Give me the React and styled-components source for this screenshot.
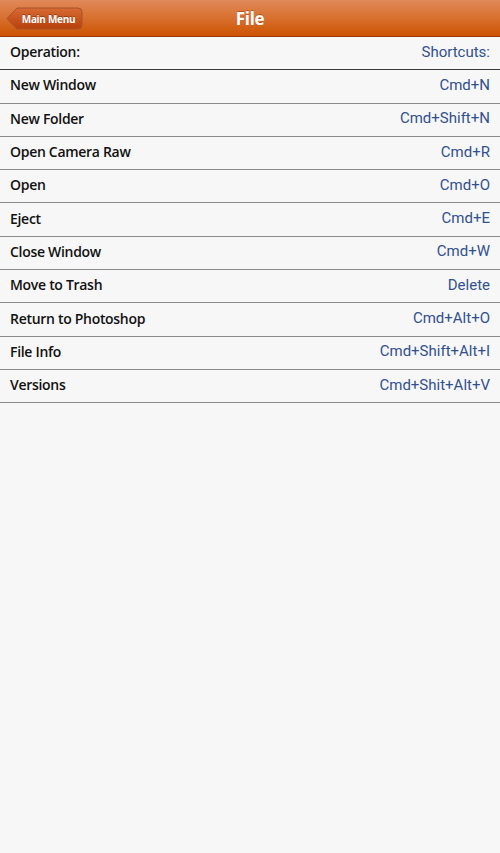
import React from 'react';
import styled, { createGlobalStyle } from 'styled-components';

const GlobalStyle = createGlobalStyle`
  html, body {
    margin: 0;
    padding: 0;
    background: #f7f7f7;
  }
  #root {
    min-height: 100vh;
    background: #f7f7f7;
  }
`;

const Page = styled.div`
  width: 500px;
  min-height: 853px;
  background: #f7f7f7;
  font-family: "Open Sans", "DejaVu Sans", sans-serif;
`;

const TopBar = styled.div`
  position: relative;
  height: 36px;
  display: flex;
  align-items: center;
  justify-content: center;
  background: linear-gradient(#e1895a, #d8702f 50%, #cc5200);
  border-bottom: 1px solid #9e3a08;
`;

const Title = styled.h1`
  margin: 0;
  color: #fff;
  font-size: 17px;
  font-weight: 700;
  letter-spacing: -0.3px;
  text-shadow: 0 -1px 0 rgba(120, 40, 0, 0.4);
`;

const BackButton = styled.button`
  position: absolute;
  left: 6px;
  top: 7px;
  width: 77px;
  height: 23px;
  padding: 0 0 0 8px;
  border: none;
  background: none;
  display: flex;
  align-items: center;
  justify-content: center;
  cursor: pointer;
`;

const BackShape = styled.svg`
  position: absolute;
  left: 0;
  top: 0;
`;

const BackLabel = styled.span`
  position: relative;
  color: #fff;
  font-family: "Open Sans", sans-serif;
  font-size: 10px;
  font-weight: 700;
  letter-spacing: -0.3px;
  text-shadow: 0 -1px 0 rgba(90, 30, 0, 0.5);
  line-height: 22px;
`;

const List = styled.div`
  display: flex;
  flex-direction: column;
`;

const Row = styled.div`
  box-sizing: border-box;
  height: 33.3px;
  display: flex;
  align-items: center;
  justify-content: space-between;
  padding: 0 10px 3px;
  border-bottom: 1px solid ${p => (p.$head ? '#3a3a3a' : '#8a8a8a')};
`;

const Operation = styled.span`
  color: #111;
  font-size: 14px;
  font-weight: 600;
  letter-spacing: -0.3px;
`;

const Shortcut = styled.span`
  color: #31508f;
  font-family: Roboto, "Liberation Sans", sans-serif;
  font-size: 15px;
`;

const rows = [
  ['New Window', 'Cmd+N'],
  ['New Folder', 'Cmd+Shift+N'],
  ['Open Camera Raw', 'Cmd+R'],
  ['Open', 'Cmd+O'],
  ['Eject', 'Cmd+E'],
  ['Close Window', 'Cmd+W'],
  ['Move to Trash', 'Delete'],
  ['Return to Photoshop', 'Cmd+Alt+O'],
  ['File Info', 'Cmd+Shift+Alt+I'],
  ['Versions', 'Cmd+Shit+Alt+V'],
];

export default function App() {
  return (
    <Page>
      <GlobalStyle />
      <TopBar>
        <BackButton>
          <BackShape width="77" height="23" viewBox="0 0 77 23">
            <defs>
              <linearGradient id="bk" x1="0" y1="0" x2="0" y2="1">
                <stop offset="0" stopColor="#d86a34" />
                <stop offset="1" stopColor="#b8400c" />
              </linearGradient>
            </defs>
            <path
              d="M1 11.5 L11 1 H72 Q76 1 76 5 V18 Q76 22 72 22 H11 Z"
              fill="url(#bk)"
              stroke="#a8532a"
              strokeWidth="1"
            />
          </BackShape>
          <BackLabel>Main Menu</BackLabel>
        </BackButton>
        <Title>File</Title>
      </TopBar>
      <List>
        <Row $head>
          <Operation>Operation:</Operation>
          <Shortcut>Shortcuts:</Shortcut>
        </Row>
        {rows.map(([op, key]) => (
          <Row key={op}>
            <Operation>{op}</Operation>
            <Shortcut>{key}</Shortcut>
          </Row>
        ))}
      </List>
    </Page>
  );
}
